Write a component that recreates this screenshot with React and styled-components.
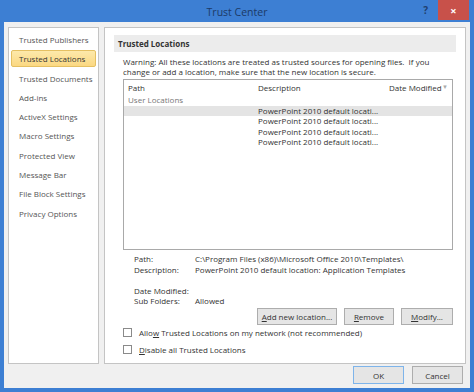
import React from "react";
import styled, { createGlobalStyle } from "styled-components";

const GlobalStyle = createGlobalStyle`
  html, body { margin: 0; padding: 0; }
  body {
    width: 474px;
    height: 392px;
    overflow: hidden;
    font-family: "Open Sans", "Noto Sans", sans-serif;
    font-size: 8px;
    color: #333;
  }
`;

const Window = styled.div`
  width: 474px;
  height: 392px;
  box-sizing: border-box;
  background: #3d7fd3;
  padding: 0 4px 4px 4px;
  display: flex;
  flex-direction: column;
`;

const TitleBar = styled.div`
  height: 22px;
  flex: none;
  position: relative;
  display: flex;
  align-items: center;
  justify-content: center;
`;

const Title = styled.div`
  font-size: 10.5px;
  color: #1c3a66;
  margin-top: 2px;
`;

const TitleButtons = styled.div`
  position: absolute;
  right: 1px;
  top: 0;
  display: flex;
  align-items: center;
  gap: 10px;
`;

const Help = styled.span`
  font-weight: bold;
  font-size: 10px;
  color: #20406f;
`;

const Close = styled.div`
  width: 31px;
  height: 20px;
  background: #c8514a;
  color: #fff;
  display: flex;
  align-items: center;
  justify-content: center;
  font-size: 11px;
  font-weight: bold;
`;

const Body = styled.div`
  flex: 1;
  background: #f0f0f0;
  display: flex;
  flex-direction: column;
  padding: 5px 4px 0 4px;
`;

const Main = styled.div`
  display: flex;
  gap: 5px;
  height: 337px;
`;

const Nav = styled.div`
  width: 91px;
  box-sizing: border-box;
  background: #fff;
  border: 1px solid #c4c4c4;
  padding: 3px 2px;
  display: flex;
  flex-direction: column;
`;

const NavItem = styled.div`
  height: 17px;
  margin-bottom: 2.3px;
  line-height: 15px;
  padding-left: 7px;
  color: ${(p) => (p.$active ? "#333" : "#555")};
  border: 1px solid ${(p) => (p.$active ? "#e5c062" : "transparent")};
  border-radius: 2px;
  background: ${(p) =>
    p.$active ? "linear-gradient(#fde9ab, #fbd882)" : "transparent"};
  box-sizing: border-box;
`;

const Panel = styled.div`
  flex: 1;
  box-sizing: border-box;
  background: #fff;
  border: 1px solid #c4c4c4;
  padding: 7px 9px 0 9px;
  display: flex;
  flex-direction: column;
`;

const SectionHeader = styled.div`
  height: 17px;
  line-height: 17px;
  background: #ececec;
  padding-left: 4px;
  font-weight: bold;
  color: #333;
`;

const Inner = styled.div`
  padding-left: 9px;
  padding-right: 3px;
  display: flex;
  flex-direction: column;
`;

const Warning = styled.div`
  margin-top: 5px;
  line-height: 10px;
  color: #333;
`;

const List = styled.div`
  margin-top: 2px;
  height: 171px;
  border: 1px solid #a9a9a9;
  box-sizing: border-box;
  background: #fff;
`;

const Row = styled.div`
  display: grid;
  grid-template-columns: 130px 131px 1fr;
  height: ${(p) => p.$h || 10.6}px;
  line-height: ${(p) => p.$h || 10.6}px;
  background: ${(p) => (p.$selected ? "#e4e4e4" : "transparent")};
  color: ${(p) => (p.$muted ? "#777" : "#333")};
  white-space: nowrap;
`;

const Cell = styled.div`
  padding-left: 4px;
  overflow: hidden;
  display: flex;
  align-items: center;
  justify-content: space-between;
`;

const SortArrow = styled.span`
  color: #aaa;
  font-size: 6px;
  margin-right: 4px;
`;

const Details = styled.div`
  margin-top: 4px;
  padding-left: 11px;
  display: grid;
  grid-template-columns: 61px 1fr;
  grid-auto-rows: 10.5px;
  line-height: 10.5px;
  color: #333;
`;

const Gap = styled.div`
  grid-column: 1 / 3;
  height: 9px;
`;

const ButtonRow = styled.div`
  display: flex;
  justify-content: flex-end;
  gap: 7px;
  margin-top: 1px;
`;

const Button = styled.div`
  width: ${(p) => p.$w}px;
  height: ${(p) => p.$h || 17}px;
  box-sizing: border-box;
  border: 1px solid ${(p) => (p.$default ? "#7eb4ea" : "#adadad")};
  background: #e5e5e5;
  display: flex;
  align-items: center;
  justify-content: center;
  color: #333;
  u { text-decoration: underline; }
`;

const CheckRow = styled.label`
  display: flex;
  align-items: center;
  gap: 7px;
  height: 11px;
  margin-top: ${(p) => p.$mt}px;
  color: #333;
`;

const Box = styled.span`
  width: 9px;
  height: 9px;
  box-sizing: border-box;
  border: 1px solid #8a8a8a;
  background: #fff;
`;

const Footer = styled.div`
  display: flex;
  justify-content: flex-end;
  gap: 8px;
  padding-top: 2px;
  padding-right: 3px;
`;

const navItems = [
  "Trusted Publishers",
  "Trusted Locations",
  "Trusted Documents",
  "Add-ins",
  "ActiveX Settings",
  "Macro Settings",
  "Protected View",
  "Message Bar",
  "File Block Settings",
  "Privacy Options",
];

const desc = "PowerPoint 2010 default locati...";

export default function App() {
  return (
    <>
      <GlobalStyle />
      <Window>
        <TitleBar>
          <Title>Trust Center</Title>
          <TitleButtons>
            <Help>?</Help>
            <Close>×</Close>
          </TitleButtons>
        </TitleBar>
        <Body>
          <Main>
            <Nav>
              {navItems.map((n) => (
                <NavItem key={n} $active={n === "Trusted Locations"}>
                  {n}
                </NavItem>
              ))}
            </Nav>
            <Panel>
              <SectionHeader>Trusted Locations</SectionHeader>
              <Inner>
                <Warning>
                  Warning: All these locations are treated as trusted sources for opening files.&nbsp; If you
                  <br />
                  change or add a location, make sure that the new location is secure.
                </Warning>
                <List>
                  <Row $h={15}>
                    <Cell>Path</Cell>
                    <Cell>Description</Cell>
                    <Cell>
                      Date Modified <SortArrow>▼</SortArrow>
                    </Cell>
                  </Row>
                  <Row $muted>
                    <Cell>User Locations</Cell>
                  </Row>
                  {[0, 1, 2, 3].map((i) => (
                    <Row key={i} $selected={i === 0}>
                      <Cell />
                      <Cell>{desc}</Cell>
                      <Cell />
                    </Row>
                  ))}
                </List>
                <Details>
                  <span>Path:</span>
                  <span>C:\Program Files (x86)\Microsoft Office 2010\Templates\</span>
                  <span>Description:</span>
                  <span>PowerPoint 2010 default location: Application Templates</span>
                  <Gap />
                  <span>Date Modified:</span>
                  <span />
                  <span>Sub Folders:</span>
                  <span>Allowed</span>
                </Details>
                <ButtonRow>
                  <Button $w={80}>
                    <span><u>A</u>dd new location...</span>
                  </Button>
                  <Button $w={50}>
                    <span><u>R</u>emove</span>
                  </Button>
                  <Button $w={52}>
                    <span><u>M</u>odify...</span>
                  </Button>
                </ButtonRow>
                <CheckRow $mt={2}>
                  <Box />
                  <span>Allo<u>w</u> Trusted Locations on my network (not recommended)</span>
                </CheckRow>
                <CheckRow $mt={6}>
                  <Box />
                  <span><u>D</u>isable all Trusted Locations</span>
                </CheckRow>
              </Inner>
            </Panel>
          </Main>
          <Footer>
            <Button $w={51} $h={18} $default>OK</Button>
            <Button $w={51} $h={18}>Cancel</Button>
          </Footer>
        </Body>
      </Window>
    </>
  );
}
